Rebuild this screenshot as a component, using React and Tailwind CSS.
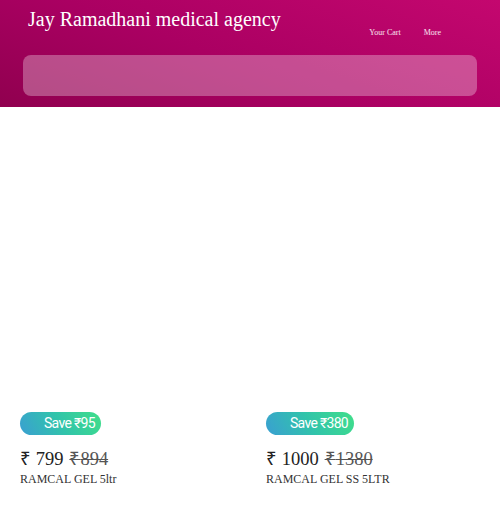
const PRODUCTS = [
  { id: 1, save: 95, price: 799, mrp: 894, name: "RAMCAL GEL 5ltr" },
  { id: 2, save: 380, price: 1000, mrp: 1380, name: "RAMCAL GEL SS 5LTR" },
];

export default function App() {
  return (
    <div className="min-h-[518px] bg-white font-['Liberation_Serif',serif]">
      <Header />
      <main className="grid grid-cols-2 gap-8 px-5 pt-[304px]">
        {PRODUCTS.map((p) => (
          <ProductCard key={p.id} product={p} />
        ))}
      </main>
    </div>
  );
}

function Header() {
  return (
    <header className="h-[107px] bg-[linear-gradient(200deg,#c4076f_0%,#aa0062_55%,#90004f_100%)] px-[23px] pt-[6px]">
      <div className="flex items-start justify-between">
        <h1 className="pl-[5px] text-[20px] leading-[26px] text-white">Jay Ramadhani medical agency</h1>
        <nav className="mr-[36px] mt-[21px] flex gap-[23px] text-[8px] text-white/90">
          <a>Your Cart</a>
          <a>More</a>
        </nav>
      </div>
      <div className="mt-[16px] h-[41px] rounded-lg bg-white/30" />
    </header>
  );
}

function ProductCard({ product }) {
  return (
    <div>
      <span className="inline-block rounded-full bg-[linear-gradient(60deg,#3a9fd2_0%,#31c4aa_50%,#40de8a_100%)] py-[2px] pl-[24px] pr-[6px] font-['Roboto',sans-serif] text-[14px] leading-[19px] tracking-[-0.7px] text-white">
        Save ₹{product.save}
      </span>
      <div className="mt-[12px] flex items-baseline gap-[6px] text-[18.5px] leading-[24px] text-[#222]">
        <span>₹ {product.price}</span>
        <span className="text-[#555] line-through">₹{product.mrp}</span>
      </div>
      <p className="text-[12px] leading-[16px] text-[#333]">{product.name}</p>
    </div>
  );
}
